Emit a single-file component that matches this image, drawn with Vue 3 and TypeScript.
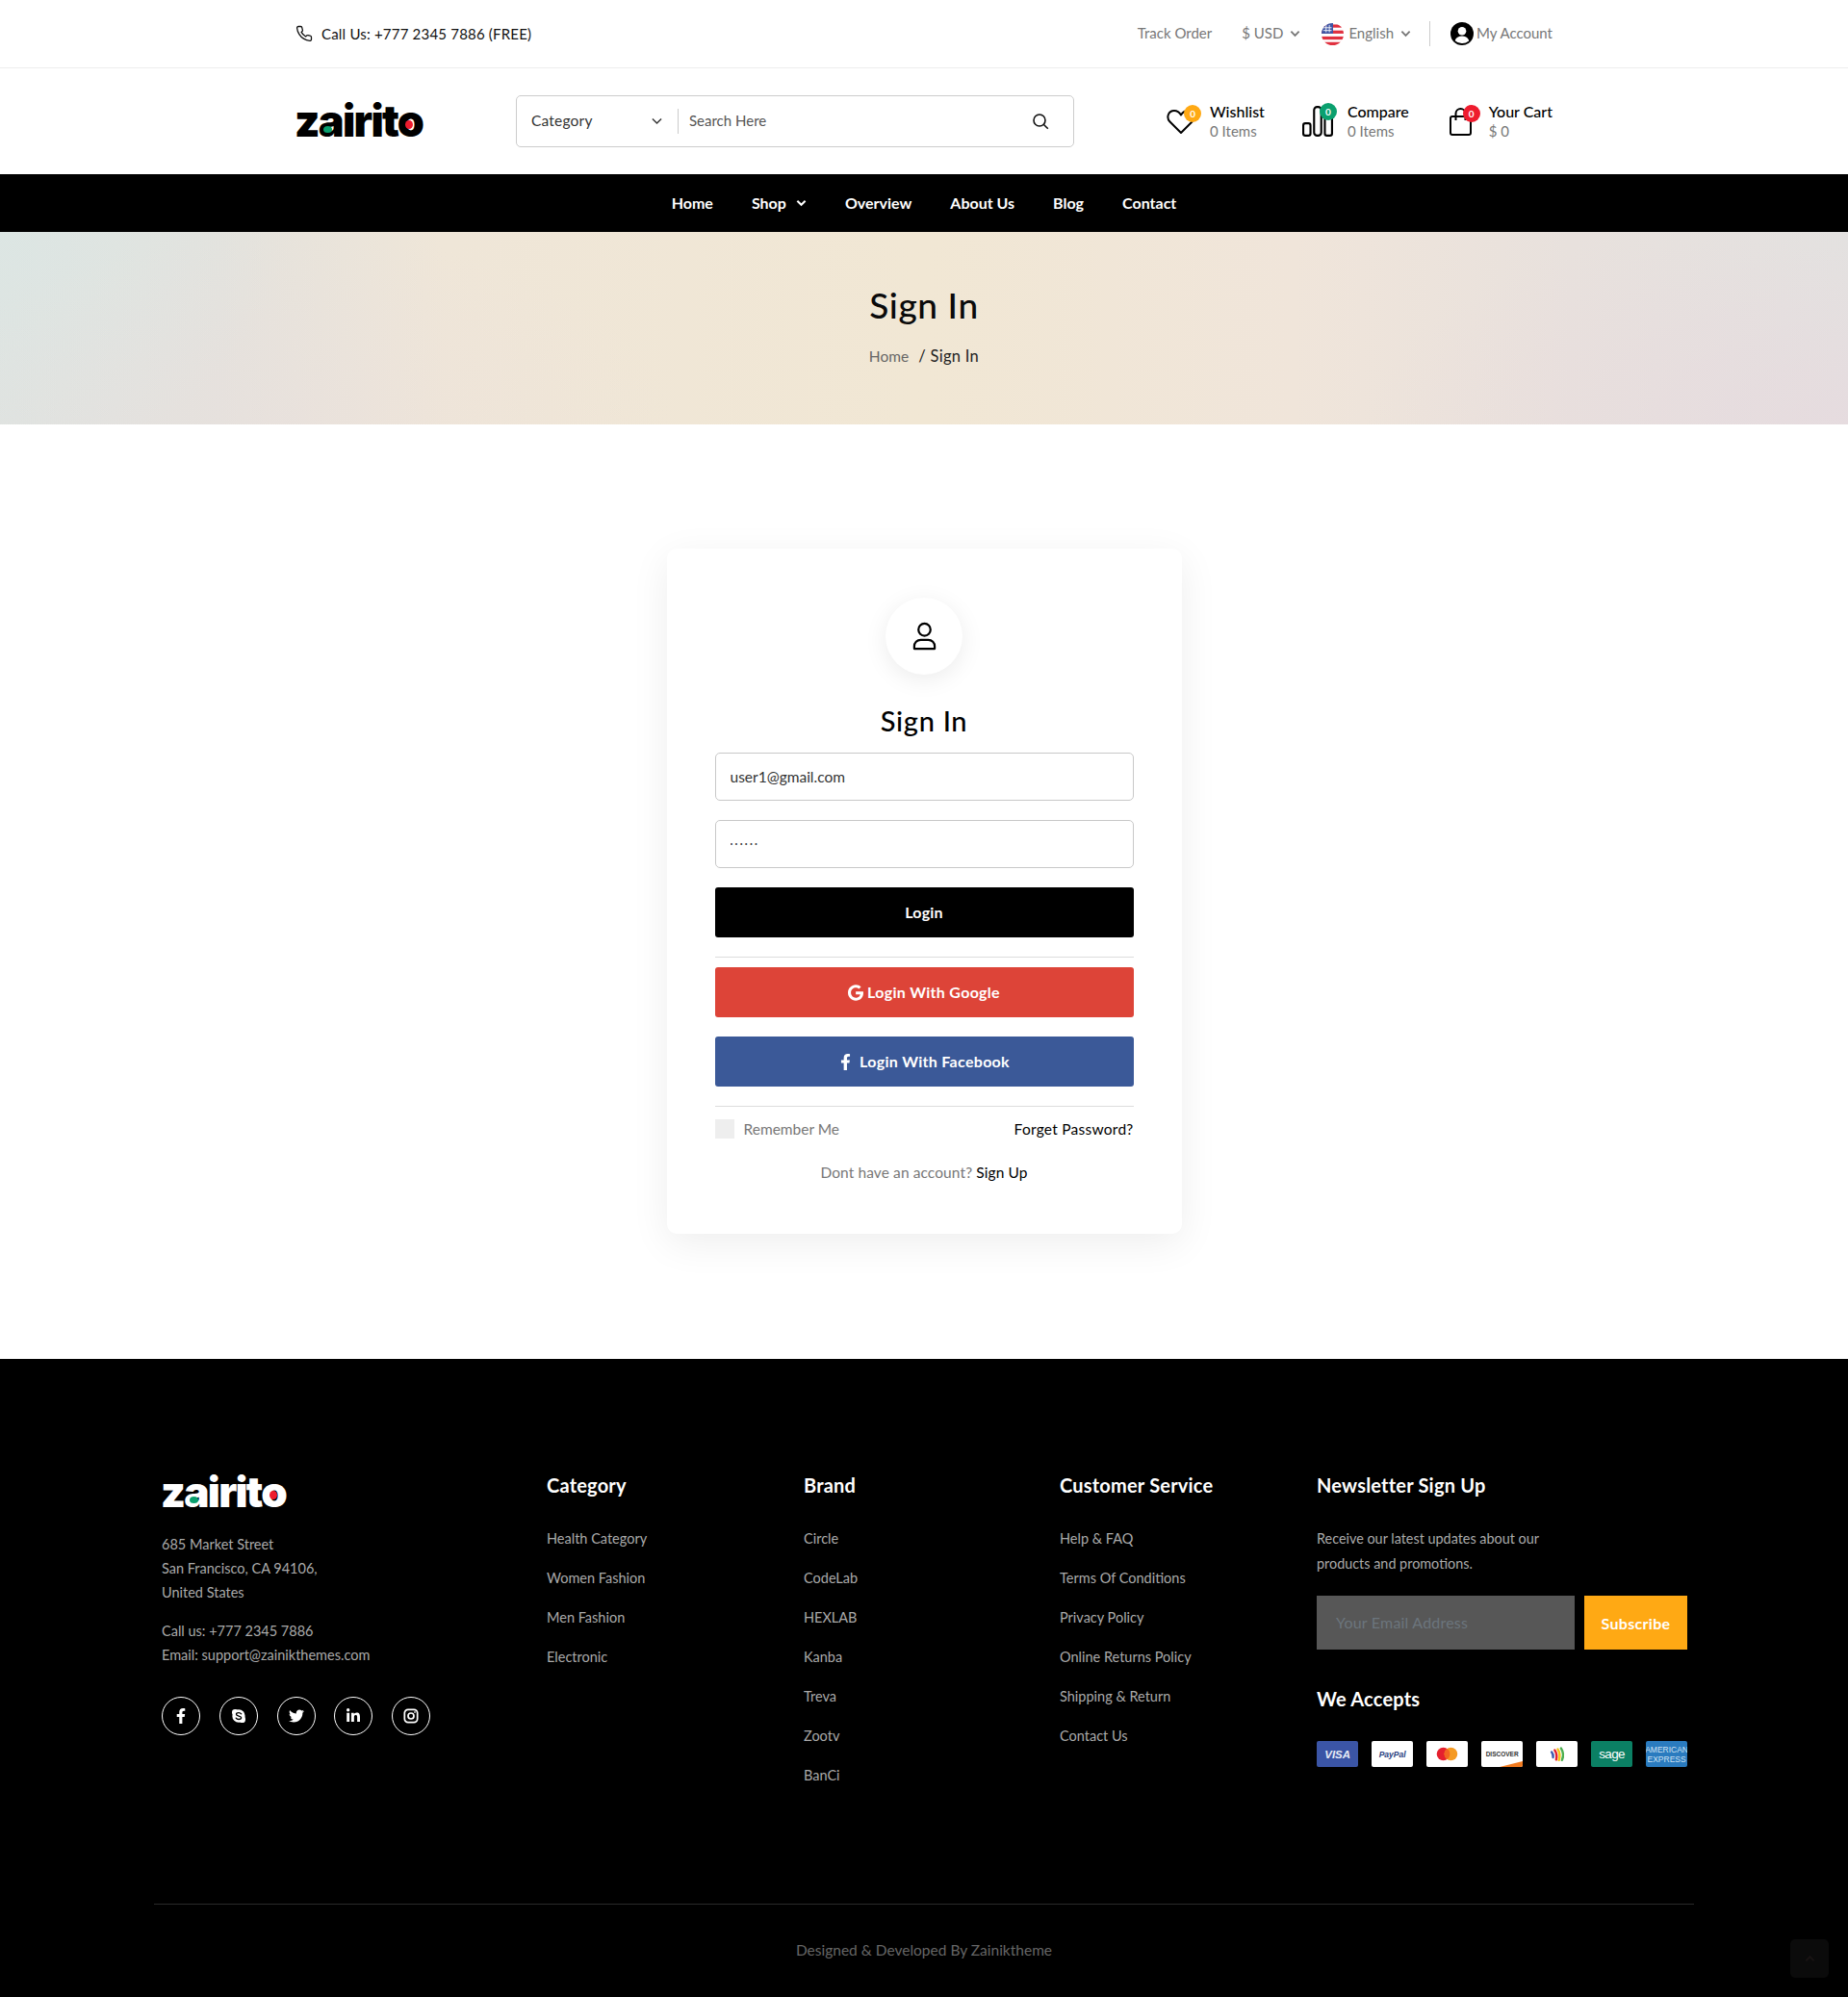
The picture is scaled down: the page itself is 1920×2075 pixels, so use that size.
<script setup lang="ts">
const navItems = [
  { label: 'Home', caret: false },
  { label: 'Shop', caret: true },
  { label: 'Overview', caret: false },
  { label: 'About Us', caret: false },
  { label: 'Blog', caret: false },
  { label: 'Contact', caret: false },
]
const columns = [
  { title: 'Category', links: ['Health Category', 'Women Fashion', 'Men Fashion', 'Electronic'] },
  { title: 'Brand', links: ['Circle', 'CodeLab', 'HEXLAB', 'Kanba', 'Treva', 'Zootv', 'BanCi'] },
  {
    title: 'Customer Service',
    links: ['Help & FAQ', 'Terms Of Conditions', 'Privacy Policy', 'Online Returns Policy', 'Shipping & Return', 'Contact Us'],
  },
]
</script>

<template>
  <div class="page">
    <div class="topbar">
      <div class="wrap topbar-row">
        <div class="call">
          <svg class="phone" viewBox="0 0 24 24" fill="none" stroke="#111" stroke-width="1.7" stroke-linecap="round" stroke-linejoin="round">
            <path d="M22 16.92v3a2 2 0 0 1-2.18 2 19.79 19.79 0 0 1-8.63-3.07 19.5 19.5 0 0 1-6-6 19.79 19.79 0 0 1-3.07-8.67A2 2 0 0 1 4.11 2h3a2 2 0 0 1 2 1.72c.13.96.36 1.9.7 2.81a2 2 0 0 1-.45 2.11L8.09 9.91a16 16 0 0 0 6 6l1.27-1.27a2 2 0 0 1 2.11-.45c.91.34 1.85.57 2.81.7A2 2 0 0 1 22 16.92z" />
          </svg>
          <span>Call Us: +777 2345 7886 (FREE)</span>
        </div>
        <div class="top-links">
          <span class="track lift">Track Order</span>
          <span class="drop usd">
            <span class="lift">$ USD</span>
            <svg class="mini" viewBox="0 0 12 8"><path d="M1.5 1.5 6 6l4.5-4.5" fill="none" stroke="#777" stroke-width="2" /></svg>
          </span>
          <span class="drop lang">
            <svg class="flag" viewBox="0 0 24 24">
              <defs><clipPath id="flagclip"><circle cx="12" cy="12" r="12" /></clipPath></defs>
              <g clip-path="url(#flagclip)">
                <rect width="24" height="24" fill="#fff" />
                <rect y="1.5" width="24" height="3.4" fill="#e0303f" />
                <rect y="8" width="24" height="3.4" fill="#e0303f" />
                <rect y="14.5" width="24" height="3.4" fill="#e0303f" />
                <rect y="20.6" width="24" height="3.4" fill="#e0303f" />
                <rect width="12.5" height="11.4" fill="#3d55a5" />
                <path d="M2 5h9M2 8h9M5 2v8M8.500 2v8" stroke="#fff" stroke-width=".9" />
              </g>
            </svg>
            <span class="lift">English</span>
            <svg class="mini" viewBox="0 0 12 8"><path d="M1.5 1.5 6 6l4.5-4.5" fill="none" stroke="#777" stroke-width="2" /></svg>
          </span>
          <span class="vline"></span>
          <span class="account">
            <svg class="acct" viewBox="0 0 24 24">
              <circle cx="12" cy="12" r="12" fill="#000" />
              <circle cx="12" cy="9.300" r="4.300" fill="#fff" />
              <path d="M4.700 19.200c1-3.200 3.600-4.700 7.300-4.700s6.300 1.500 7.300 4.700A10 10 0 0 1 12 22a10 10 0 0 1-7.300-2.800z" fill="#fff" />
            </svg>
            <span class="lift">My Account</span>
          </span>
        </div>
      </div>
    </div>

    <header class="wrap header-row">
      <div class="logo">
        <span>zairito</span>
        <i class="dot dot-a"></i>
        <i class="dot dot-o"></i>
      </div>
      <div class="search">
        <div class="cat">
          <span class="lift">Category</span>
          <svg class="cat-caret" viewBox="0 0 12 8"><path d="M1 1.200 6 6.200l5-5" fill="none" stroke="#333" stroke-width="1.500" /></svg>
        </div>
        <span class="search-line"></span>
        <span class="search-text lift">Search Here</span>
        <svg class="search-icon" viewBox="0 0 18 18" fill="none" stroke="#111" stroke-width="1.600">
          <circle cx="8" cy="8" r="6" />
          <path d="m12.500 12.500 4.300 4.300" />
        </svg>
      </div>
      <div class="stats">
        <div class="stat">
          <div class="stat-icon heart-box">
            <svg viewBox="0 0 30 28" fill="none" stroke="#000" stroke-width="2" stroke-linejoin="round">
              <path d="M15 26 3.500 14.500C-.5 10.500 1.500 3 8 3c3.500 0 5.500 2 7 4.500C16.500 5 18.500 3 22 3c6.500 0 8.500 7.500 4.500 11.500z" />
            </svg>
            <b class="badge orange">0</b>
          </div>
          <div class="stat-text"><strong>Wishlist</strong><small>0 Items</small></div>
        </div>
        <div class="stat">
          <div class="stat-icon bars-box">
            <svg viewBox="0 0 30 30" fill="none" stroke="#000" stroke-width="2">
              <rect x="1" y="17" width="7" height="12" rx="2" />
              <rect x="11.500" y="1" width="7" height="28" rx="3" />
              <rect x="22" y="9" width="7" height="20" rx="2" />
            </svg>
            <b class="badge green">0</b>
          </div>
          <div class="stat-text"><strong>Compare</strong><small>0 Items</small></div>
        </div>
        <div class="stat">
          <div class="stat-icon bag-box">
            <svg viewBox="0 0 24 30" fill="none" stroke="#000" stroke-width="2">
              <rect x="1" y="10" width="21" height="19" rx="2" />
              <path d="M6.500 14V7a5 5 0 0 1 10 0v7" />
            </svg>
            <b class="badge red">0</b>
          </div>
          <div class="stat-text"><strong>Your Cart</strong><small>$ 0</small></div>
        </div>
      </div>
    </header>

    <nav class="nav">
      <a v-for="item in navItems" :key="item.label" class="nav-item">
        <span class="lift">{{ item.label }}</span>
        <svg v-if="item.caret" class="nav-caret" viewBox="0 0 12 8"><path d="M1.500 1.500 6 6l4.500-4.500" fill="none" stroke="#fff" stroke-width="2.200" /></svg>
      </a>
    </nav>

    <section class="hero">
      <h1>Sign In</h1>
      <div class="crumbs"><span class="crumb-home">Home</span><span class="crumb-now">/ Sign In</span></div>
    </section>

    <main class="main">
      <div class="card">
        <div class="avatar">
          <svg viewBox="0 0 28 30" fill="none" stroke="#000" stroke-width="2.300" stroke-linejoin="round">
            <circle cx="14" cy="8" r="6.500" />
            <path d="M3 28.500v-2.500c0-4 3-7 7-7h8c4 0 7 3 7 7v2.500z" />
          </svg>
        </div>
        <h2>Sign In</h2>
        <input class="field" type="email" value="user1@gmail.com" />
        <input class="field pass" type="password" value="123456" />
        <button class="btn black"><span class="lift">Login</span></button>
        <div class="rule first-rule"></div>
        <button class="btn google">
          <svg class="g-icon" viewBox="0 0 488 512"><path fill="#fff" d="M488 261.800C488 403.300 391.100 504 248 504 110.800 504 0 393.200 0 256S110.800 8 248 8c66.800 0 123 24.500 166.300 64.900l-67.500 64.900C258.500 52.600 94.300 116.600 94.300 256c0 86.500 69.100 156.600 153.700 156.600 98.200 0 135-70.400 140.800-106.900H248v-85.300h236.100c2.300 12.700 3.900 24.900 3.900 41.400z" /></svg>
          <span class="lift">Login With Google</span>
        </button>
        <button class="btn facebook">
          <svg class="f-icon" viewBox="0 0 320 512"><path fill="#fff" d="M279.140 288l14.220-92.660h-88.910v-60.130c0-25.350 12.420-50.060 52.240-50.060h40.420V6.260S260.430 0 225.360 0c-73.220 0-121.080 44.380-121.080 124.720v70.620H22.890V288h81.390v224h100.170V288z" /></svg>
          <span class="lift">Login With Facebook</span>
        </button>
        <div class="rule second-rule"></div>
        <div class="remember-row">
          <label class="remember"><span class="check"></span>Remember Me</label>
          <a class="forgot">Forget Password?</a>
        </div>
        <p class="signup">Dont have an account? <a>Sign Up</a></p>
      </div>
    </main>

    <footer class="footer">
      <div class="foot-grid">
        <div class="foot-col">
          <div class="logo logo-light">
            <span>zairito</span>
            <i class="dot dot-a"></i>
            <i class="dot dot-o"></i>
          </div>
          <p class="addr">685 Market Street<br />San Francisco, CA 94106,<br />United States</p>
          <p class="addr contact">Call us: +777 2345 7886<br />Email: support@zainikthemes.com</p>
          <div class="socials">
            <a class="soc"><svg viewBox="0 0 320 512" class="s-f"><path fill="#fff" d="M279.140 288l14.220-92.660h-88.910v-60.130c0-25.350 12.420-50.060 52.240-50.060h40.420V6.260S260.430 0 225.360 0c-73.220 0-121.080 44.380-121.080 124.720v70.620H22.890V288h81.390v224h100.170V288z" /></svg></a>
            <a class="soc"><svg viewBox="0 0 24 24" class="s-i">
              <circle cx="12" cy="12" r="10" fill="#fff" /><circle cx="6.500" cy="6.500" r="5" fill="#fff" /><circle cx="17.500" cy="17.500" r="5" fill="#fff" />
              <path d="M16 8.700c-.8-1.200-2.200-1.800-4-1.800-2.200 0-3.800 1-3.800 2.600 0 3.500 7.800 1.800 7.800 5.200 0 1.500-1.700 2.500-4 2.500-2 0-3.400-.7-4.200-2" fill="none" stroke="#000" stroke-width="2" stroke-linecap="round" />
            </svg></a>
            <a class="soc"><svg viewBox="0 0 512 512" class="s-i"><path fill="#fff" d="M459.370 151.716c.325 4.548.325 9.097.325 13.645 0 138.720-105.583 298.558-298.558 298.558-59.452 0-114.680-17.219-161.137-47.106 8.447.974 16.568 1.299 25.340 1.299 49.055 0 94.213-16.568 130.274-44.832-46.132-.975-84.792-31.188-98.112-72.772 6.498.974 12.995 1.624 19.818 1.624 9.421 0 18.843-1.300 27.614-3.573-48.081-9.747-84.143-51.980-84.143-102.985v-1.299c13.969 7.797 30.214 12.670 47.431 13.319-28.264-18.843-46.781-51.005-46.781-87.391 0-19.492 5.197-37.360 14.294-52.954 51.655 63.675 129.300 105.258 216.365 109.807-1.624-7.797-2.599-15.918-2.599-24.040 0-57.828 46.782-104.934 104.934-104.934 30.213 0 57.502 12.670 76.670 33.137 23.715-4.548 46.456-13.320 66.599-25.340-7.798 24.366-24.366 44.833-46.132 57.827 21.117-2.273 41.584-8.122 60.426-16.243-14.292 20.791-32.161 39.308-52.628 54.253z" /></svg></a>
            <a class="soc"><svg viewBox="0 0 448 512" class="s-i"><path fill="#fff" d="M100.280 448H7.400V148.900h92.880zM53.790 108.100C24.090 108.100 0 83.500 0 53.800a53.790 53.790 0 0 1 107.580 0c0 29.700-24.100 54.300-53.790 54.300zM447.900 448h-92.680V302.400c0-34.700-.7-79.200-48.290-79.200-48.290 0-55.690 37.700-55.690 76.700V448h-92.780V148.900h89.080v40.800h1.300c12.400-23.500 42.690-48.300 87.880-48.300 94 0 111.280 61.900 111.280 142.300V448z" /></svg></a>
            <a class="soc"><svg viewBox="0 0 24 24" class="s-i" fill="none" stroke="#fff" stroke-width="2.600">
              <rect x="2" y="2" width="20" height="20" rx="5.500" /><circle cx="12" cy="12" r="4.500" /><circle cx="18" cy="6" r=".8" fill="#fff" stroke-width="1" />
            </svg></a>
          </div>
        </div>

        <div v-for="col in columns" :key="col.title" class="foot-col">
          <h4>{{ col.title }}</h4>
          <ul>
            <li v-for="link in col.links" :key="link">{{ link }}</li>
          </ul>
        </div>

        <div class="foot-col">
          <h4>Newsletter Sign Up</h4>
          <p class="news">Receive our latest updates about our<br />products and promotions.</p>
          <div class="sub">
            <input class="sub-input" placeholder="Your Email Address" />
            <button class="sub-btn"><span class="lift">Subscribe</span></button>
          </div>
          <h4 class="accepts">We Accepts</h4>
          <div class="pays">
            <span class="pay visa">VISA</span>
            <span class="pay paypal">PayPal</span>
            <span class="pay">
              <svg viewBox="0 0 44 27" class="pay-svg"><circle cx="18" cy="13.500" r="7" fill="#e5202e" /><circle cx="26" cy="13.500" r="7" fill="#f59a23" /><path d="M22 7.800a7 7 0 0 1 0 11.400 7 7 0 0 1 0-11.400z" fill="#f26522" /></svg>
            </span>
            <span class="pay discover">DISCOVER<i></i></span>
            <span class="pay">
              <svg viewBox="0 0 44 27" class="pay-svg" fill="none" stroke-width="2.500" stroke-linecap="round">
                <path d="M16.500 11.500c1.200 1.500 1.800 3.500 1.500 5.500" stroke="#3d5bb0" />
                <path d="M19.800 9.500c1.800 2.500 2.500 6 1.500 10" stroke="#e5202e" />
                <path d="M23 8.500c2 3 2.600 7 1.200 11.500" stroke="#f5c518" />
                <path d="M26.500 7.500c2.400 3.800 2.600 8.500 1 12.500" stroke="#4caf50" />
              </svg>
            </span>
            <span class="pay sage">sage</span>
            <span class="pay amex">AMERICAN<br />EXPRESS</span>
          </div>
        </div>
      </div>
      <div class="foot-rule"></div>
      <p class="copy">Designed &amp; Developed By Zainiktheme</p>
      <a class="totop">
        <svg viewBox="0 0 12 8"><path d="M1.500 6.500 6 2l4.500 4.500" fill="none" stroke="#1a1414" stroke-width="2" /></svg>
      </a>
    </footer>
  </div>
</template>

<style>
html,
body {
  margin: 0;
  background: #fff;
}
</style>

<style scoped>
.page {
  position: relative;
  width: 1920px;
  font-family: Lato, "Noto Sans", "Liberation Sans", sans-serif;
  font-size: 15px;
  color: #000;
}
h1,
h2,
h4,
p,
ul {
  margin: 0;
  padding: 0;
}
.lift {
  padding-bottom: 2px;
}
.wrap {
  width: 1306px;
  margin: 0 auto;
}

/* top bar */
.topbar {
  height: 70px;
  border-bottom: 1px solid #eee;
}
.topbar-row {
  height: 70px;
  display: flex;
  align-items: center;
  justify-content: space-between;
}
.call {
  display: flex;
  align-items: center;
  gap: 9px;
  color: #111;
  font-size: 15px;
  letter-spacing: 0.2px;
}
.phone {
  width: 18px;
  height: 18px;
}
.top-links {
  display: flex;
  align-items: center;
  color: #777;
  font-size: 15px;
}
.track {
  margin-right: 31px;
}
.drop {
  display: flex;
  align-items: center;
}
.usd {
  gap: 7px;
  margin-right: 22px;
}
.lang {
  gap: 5px;
}
.lang .mini {
  margin-left: 2px;
}
.mini {
  width: 11px;
  height: 8px;
}
.flag {
  width: 23px;
  height: 23px;
}
.vline {
  width: 1px;
  height: 26px;
  background: #ccc;
  margin: 0 21px 0 19px;
}
.account {
  display: flex;
  align-items: center;
  gap: 3px;
}
.acct {
  width: 24px;
  height: 24px;
}

/* header */
.header-row {
  height: 110px;
  display: flex;
  align-items: center;
}
.logo {
  position: relative;
  width: 229px;
  height: 36px;
  flex: none;
  font-family: Inter, "Liberation Sans", sans-serif;
  font-weight: 900;
  font-size: 45px;
  line-height: 36px;
  letter-spacing: -1.7px;
  color: #000;
}
.logo span {
  display: block;
  margin-left: -1px;
}
.dot {
  position: absolute;
  border-radius: 50%;
}
.dot-a {
  left: 29px;
  top: 23px;
  width: 9px;
  height: 7px;
  background: #0aa06e;
}
.dot-o {
  left: 114px;
  top: 17px;
  width: 8px;
  height: 9px;
  background: #ee1c2e;
}
.search {
  width: 580px;
  height: 54px;
  box-sizing: border-box;
  border: 1px solid #ccc;
  border-radius: 5px;
  display: flex;
  align-items: center;
  padding: 0 25px 0 15px;
  flex: none;
}
.cat {
  width: 136px;
  display: flex;
  align-items: center;
  justify-content: space-between;
  color: #333;
  font-size: 15.500px;
  letter-spacing: 0.2px;
}
.cat-caret {
  width: 11px;
  height: 8px;
}
.search-line {
  width: 1px;
  height: 26px;
  background: #ccc;
  margin: 0 11px 0 16px;
}
.search-text {
  flex: 1;
  color: #555;
}
.search-icon {
  width: 18px;
  height: 18px;
}
.stats {
  flex: 1;
  display: flex;
  justify-content: flex-end;
  gap: 42px;
  margin-top: -1px;
}
.stat {
  display: flex;
  align-items: center;
  gap: 9px;
}
.stat-icon {
  position: relative;
  display: flex;
}
.stat-icon svg {
  display: block;
}
.heart-box svg {
  width: 30px;
  height: 28px;
}
.bars-box svg {
  width: 32px;
  height: 32px;
}
.bag-box svg {
  width: 24px;
  height: 30px;
}
.bag-box {
  margin-right: 8px;
}
.heart-box {
  margin-right: 6px;
}
.bars-box {
  margin-left: -3px;
  margin-right: 6px;
}
.badge {
  position: absolute;
  width: 18px;
  height: 18px;
  border-radius: 50%;
  color: #fff;
  font-size: 10px;
  font-weight: 700;
  line-height: 18px;
  text-align: center;
}
.orange {
  background: #ffa914;
  right: -6px;
  top: -3px;
}
.green {
  background: #0aa06e;
  right: -4px;
  top: -3px;
}
.red {
  background: #ee1c2e;
  right: -8px;
  top: -2px;
}
.stat-text {
  display: flex;
  flex-direction: column;
  line-height: 20px;
}
.stat-text strong {
  font-weight: 500;
  font-size: 16px;
  color: #000;
}
.stat-text small {
  font-size: 15px;
  color: #777;
}

/* nav */
.nav {
  height: 60px;
  background: #000;
  display: flex;
  align-items: center;
  justify-content: center;
  gap: 40px;
}
.nav-item {
  display: flex;
  align-items: center;
  gap: 10px;
  color: #fff;
  font-size: 16px;
  font-weight: 700;
}
.nav-caret {
  width: 11px;
  height: 8px;
}

/* hero */
.hero {
  height: 200px;
  display: flex;
  flex-direction: column;
  align-items: center;
  background:
    radial-gradient(ellipse 500px 220px at 100% 100%, rgba(232, 214, 222, 0.55), transparent),
    radial-gradient(ellipse 400px 200px at 300px 100%, rgba(235, 222, 222, 0.35), transparent),
    radial-gradient(ellipse 300px 240px at 0% 0%, rgba(218, 232, 230, 0.55), transparent),
    linear-gradient(90deg, #dfe3e0 0%, #e4e2dd 12%, #efe6d8 24%, #f1e7d4 50%, #f0e5da 70%, #e8e1dd 85%, #e3e2e0 100%);
}
.hero h1 {
  margin-top: 53px;
  font-size: 37px;
  line-height: 46px;
  font-weight: 500;
  color: #0a0a0a;
  letter-spacing: 0.6px;
}
.crumbs {
  margin-top: 18px;
  display: flex;
  gap: 10px;
  font-size: 16.500px;
  line-height: 24px;
}
.crumb-home {
  color: #666;
  font-size: 15.500px;
}
.crumb-now {
  color: #222;
  letter-spacing: 0.3px;
}

/* card */
.main {
  padding: 129px 0 130px;
  display: flex;
  justify-content: center;
}
.card {
  width: 535px;
  height: 712px;
  box-sizing: border-box;
  padding: 50px;
  border-radius: 10px;
  background: #fff;
  box-shadow: 0 10px 40px rgba(0, 0, 0, 0.07);
  display: flex;
  flex-direction: column;
  align-items: stretch;
}
.avatar {
  align-self: center;
  width: 80px;
  height: 80px;
  margin-top: 1px;
  border-radius: 50%;
  background: #fff;
  box-shadow: 0 5px 25px rgba(0, 0, 0, 0.08);
  display: flex;
  align-items: center;
  justify-content: center;
}
.avatar svg {
  width: 27px;
  height: 30px;
  margin-bottom: 1px;
}
.card h2 {
  margin-top: 30px;
  text-align: center;
  font-size: 29px;
  line-height: 36px;
  font-weight: 500;
  color: #000;
  letter-spacing: 0.7px;
}
.field {
  height: 50px;
  box-sizing: border-box;
  border: 1px solid #c8c8c8;
  border-radius: 5px;
  background: #fff;
  padding: 0 15px;
  font: 15.500px Lato, sans-serif;
  color: #333;
  outline: none;
}
.field:first-of-type {
  margin-top: 15px;
}
.pass {
  margin-top: 20px;
  font-size: 5px;
  letter-spacing: 2.200px;
  color: #444;
}
.btn {
  height: 52px;
  border: 0;
  border-radius: 3px;
  color: #fff;
  font: 700 16px Lato, sans-serif;
  letter-spacing: 0.2px;
  display: flex;
  align-items: center;
  justify-content: center;
}
.black {
  background: #000;
  margin-top: 20px;
}
.rule {
  height: 1px;
  background: #ddd;
}
.first-rule {
  margin: 20px 0 10px;
}
.second-rule {
  margin-top: 20px;
}
.google {
  background: #dd4438;
  gap: 4px;
  letter-spacing: 0.3px;
}
.facebook {
  background: #3b5998;
  margin-top: 20px;
  gap: 9px;
  padding-left: 8px;
  letter-spacing: 0.3px;
}
.g-icon {
  width: 16px;
  height: 17px;
}
.f-icon {
  width: 11px;
  height: 17px;
}
.remember-row {
  margin-top: 13px;
  height: 20px;
  display: flex;
  align-items: center;
  justify-content: space-between;
}
.remember {
  display: flex;
  align-items: center;
  gap: 10px;
  color: #777;
  font-size: 15.500px;
}
.check {
  width: 20px;
  height: 20px;
  background: #eee;
}
.forgot {
  color: #000;
  font-size: 15.500px;
  letter-spacing: 0.25px;
}
.signup {
  margin-top: 23px;
  line-height: 24px;
  text-align: center;
  color: #777;
  font-size: 15.500px;
  letter-spacing: 0.1px;
}
.signup a {
  color: #000;
}

/* footer */
.footer {
  position: relative;
  height: 663px;
  background: #000;
  box-sizing: border-box;
  padding-top: 119px;
  color: #aaa;
}
.foot-grid {
  width: 1600px;
  margin: 0 auto;
  box-sizing: border-box;
  padding-left: 8px;
  display: grid;
  grid-template-columns: 400px 267px 266px 267px 385px;
  height: 326px;
}
.logo-light {
  width: auto;
  color: #fff;
  margin-top: 1px;
  font-size: 44px;
}
.logo-light .dot-o {
  left: 112px;
}
.addr {
  margin-top: 24px;
  line-height: 25px;
  font-size: 14.500px;
  color: #aaa;
}
.contact {
  margin-top: 15px;
}
.socials {
  margin-top: 31px;
  display: flex;
  gap: 19.800px;
}
.soc {
  width: 40px;
  height: 40px;
  box-sizing: border-box;
  border: 1px solid #fff;
  border-radius: 50%;
  display: flex;
  align-items: center;
  justify-content: center;
}
.s-f {
  width: 10px;
  height: 16px;
}
.s-i {
  width: 16px;
  height: 16px;
}
.foot-col h4 {
  font-size: 20px;
  line-height: 24px;
  font-weight: 700;
  color: #fff;
  letter-spacing: 0.2px;
}
.foot-col ul {
  margin-top: 32px;
  list-style: none;
  display: flex;
  flex-direction: column;
  gap: 17px;
}
.foot-col li {
  line-height: 24px;
  font-size: 14.500px;
  color: #aaa;
}
.news {
  margin-top: 31px;
  line-height: 26px;
  font-size: 14.400px;
  color: #aaa;
}
.sub {
  margin-top: 20px;
  display: flex;
  gap: 10px;
}
.sub-input {
  width: 268px;
  height: 56px;
  box-sizing: border-box;
  border: 0;
  padding: 0 20px 2px;
  background: #575757;
  font: 16px Lato, sans-serif;
  letter-spacing: 0.2px;
  outline: none;
}
.sub-input::placeholder {
  color: #6c757d;
  opacity: 1;
}
.sub-btn {
  width: 107px;
  height: 56px;
  border: 0;
  background: #ffa914;
  color: #fff;
  font: 700 16px Lato, sans-serif;
  letter-spacing: 0.3px;
}
.foot-col .accepts {
  margin-top: 39px;
}
.pays {
  margin-top: 32px;
  width: 385px;
  display: flex;
  gap: 13.700px;
}
.pay {
  width: 43.300px;
  height: 27px;
  flex: none;
  overflow: hidden;
  position: relative;
  border-radius: 2px;
  background: #fff;
  display: flex;
  align-items: center;
  justify-content: center;
  line-height: 1;
}
.pay-svg {
  width: 43px;
  height: 27px;
}
.visa {
  background: #3b55a6;
  color: #e8ecf6;
  font: italic 700 11.500px "Liberation Sans", sans-serif;
}
.paypal {
  color: #27407f;
  font: italic 700 8.500px "Liberation Sans", sans-serif;
}
.discover {
  color: #333;
  font: 700 6.500px "Liberation Sans", sans-serif;
}
.discover i {
  position: absolute;
  right: 0;
  bottom: 0;
  width: 0;
  height: 0;
  border-style: solid;
  border-width: 0 0 6px 24px;
  border-color: transparent transparent #f07a1f transparent;
}
.sage {
  background: #0b8064;
  color: #fff;
  font: 400 13.500px "Liberation Sans", sans-serif;
  letter-spacing: -0.6px;
}
.amex {
  background: #2a7bbf;
  color: #cfe2f2;
  font: 400 8.500px "Liberation Sans", sans-serif;
  text-align: center;
  white-space: nowrap;
}
.foot-rule {
  width: 1600px;
  height: 1px;
  margin: 121px auto 0;
  background: #2a2a2a;
}
.copy {
  margin-top: 35px;
  line-height: 24px;
  text-align: center;
  font-size: 15.500px;
  color: #666;
}
.totop {
  position: absolute;
  right: 20px;
  bottom: 20px;
  width: 40px;
  height: 40px;
  border-radius: 5px;
  background: #0b0b0b;
  display: flex;
  align-items: center;
  justify-content: center;
}
.totop svg {
  width: 11px;
  height: 8px;
}
</style>
